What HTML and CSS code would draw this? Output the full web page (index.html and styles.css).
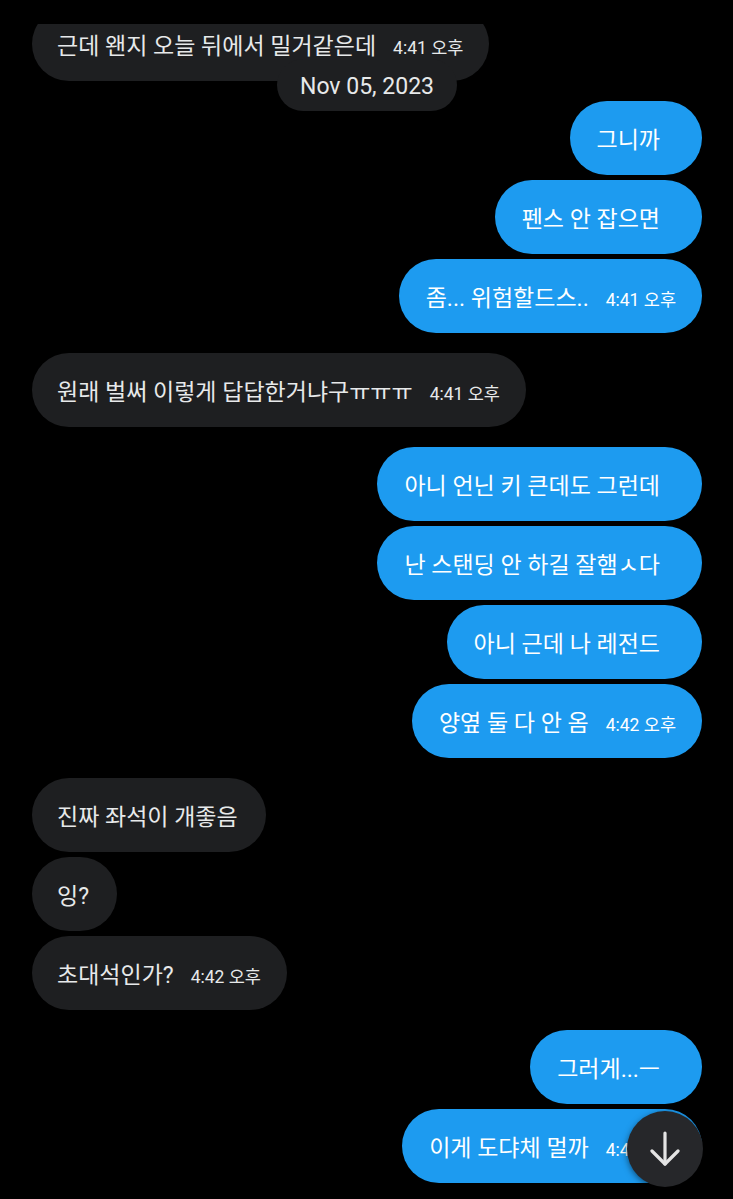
FILE: index.html
```html
<!DOCTYPE html>
<html lang="ko">
  <head>
    <meta charset="UTF-8" />
    <meta name="viewport" content="width=device-width, initial-scale=1.0" />
    <title>대화</title>
    <link rel="stylesheet" href="styles.css">
  </head>
  <body>
    <div class="chat">
      <div class="bubble in first">근데 왠지 오늘 뒤에서 밀거같은데<span class="time">4:41 오후</span></div>

      <div class="group">
        <div class="bubble out">그니까</div>
        <div class="bubble out">펜스 안 잡으면</div>
        <div class="bubble out timed">좀... 위험할드스..<span class="time">4:41 오후</span></div>
      </div>

      <div class="group">
        <div class="bubble in timed">원래 벌써 이렇게 답답한거냐구ㅠㅠㅠ<span class="time">4:41 오후</span></div>
      </div>

      <div class="group">
        <div class="bubble out">아니 언닌 키 큰데도 그런데</div>
        <div class="bubble out">난 스탠딩 안 하길 잘햄ㅅ다</div>
        <div class="bubble out">아니 근데 나 레전드</div>
        <div class="bubble out timed">양옆 둘 다 안 옴<span class="time">4:42 오후</span></div>
      </div>

      <div class="group">
        <div class="bubble in">진짜 좌석이 개좋음</div>
        <div class="bubble in">잉?</div>
        <div class="bubble in timed">초대석인가?<span class="time">4:42 오후</span></div>
      </div>

      <div class="group">
        <div class="bubble out">그러게...ㅡ</div>
        <div class="bubble out timed">이게 도댜체 멀까<span class="time">4:42 오후</span></div>
      </div>
    </div>

    <div class="date-pill">Nov 05, 2023</div>

    <button class="scroll-down" aria-label="아래로">
      <svg width="30" height="36" viewBox="0 0 30 36" fill="none" stroke="#e4e4e4" stroke-width="3.2" stroke-linecap="round" stroke-linejoin="round">
        <path d="M15 2v31" />
        <path d="M2 20l13 13 13-13" />
      </svg>
    </button>
  </body>
</html>
```

FILE: styles.css
```css
*,
*::before,
*::after {
  box-sizing: border-box;
  margin: 0;
  padding: 0;
}
html,
body {
  height: 100%;
}
body {
  background: #000;
  font-family: Roboto, "Noto Sans CJK KR", sans-serif;
  overflow: hidden;
}

.chat {
  margin-top: 24px;
  padding: 0 31px 0 32px;
  display: flex;
  flex-direction: column;
  gap: 20px;
  overflow: hidden;
}
.group {
  display: flex;
  flex-direction: column;
  gap: 5px;
}

.bubble {
  height: 74px;
  border-radius: 37px;
  display: flex;
  align-items: baseline;
  font-size: 23px;
  line-height: 74px;
  white-space: nowrap;
  width: fit-content;
  padding-top: 3px;
}
.bubble.in {
  align-self: flex-start;
  background: #1e1f21;
  color: #e7e9ea;
  padding-left: 25px;
  padding-right: 28px;
}
.bubble.out {
  align-self: flex-end;
  background: #1d9bf0;
  color: #fff;
  padding-left: 27px;
  padding-right: 42px;
}
.bubble.timed,
.bubble.first {
  padding-right: 26px;
}
.bubble.first {
  margin-top: -17px;
}

.time {
  font-size: 17.5px;
  margin-left: 17px;
}

.date-pill {
  position: absolute;
  top: 59px;
  left: 277px;
  width: 180px;
  height: 52px;
  border-radius: 26px;
  background: #1e1f21;
  color: #e7e9ea;
  font-size: 23px;
  display: flex;
  align-items: center;
  justify-content: center;
  padding-top: 2px;
}

.scroll-down {
  position: absolute;
  left: 627px;
  top: 1111px;
  width: 76px;
  height: 76px;
  border-radius: 50%;
  border: 0;
  background: #26272a;
  box-shadow: 0 2px 6px rgba(0, 0, 0, 0.5);
  display: flex;
  align-items: center;
  justify-content: center;
}
```
